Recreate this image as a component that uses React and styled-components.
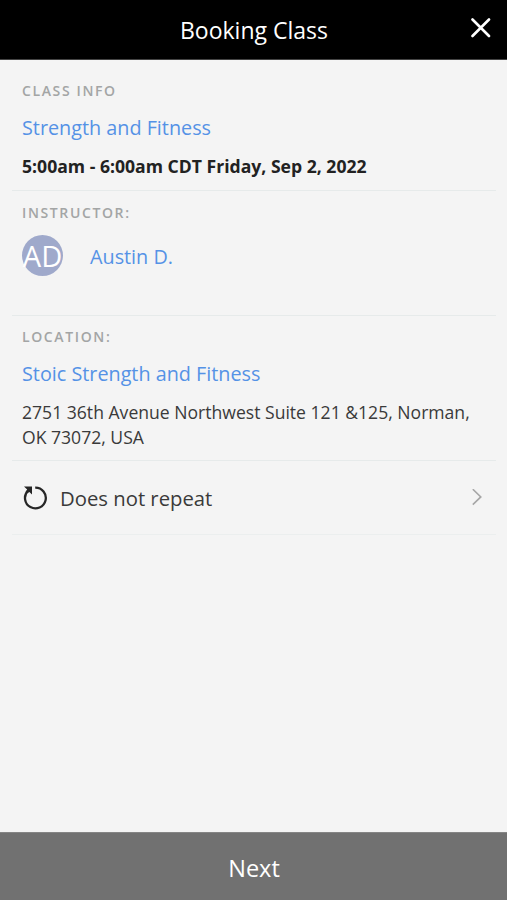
import React from "react";
import styled, { createGlobalStyle } from "styled-components";

export default function App() {
  return (
    <>
      <GlobalStyle />
      <Page>
        <Header>
          <Title>Booking Class</Title>
          <CloseButton aria-label="Close">
            <svg width="20" height="20" viewBox="0 0 20 20" fill="none" stroke="#fff" strokeWidth="2.6" strokeLinecap="round">
              <path d="M1.5 1.5L18 18M18 1.5L1.5 18" />
            </svg>
          </CloseButton>
        </Header>
        <Content>
          <Section $height={131}>
            <Label>CLASS INFO</Label>
            <LinkText href="#class">Strength and Fitness</LinkText>
            <Time>5:00am - 6:00am CDT Friday, Sep 2, 2022</Time>
          </Section>
          <Section $height={125}>
            <Label>INSTRUCTOR:</Label>
            <Instructor>
              <Avatar>AD</Avatar>
              <InstructorName href="#instructor">Austin D.</InstructorName>
            </Instructor>
          </Section>
          <Section $height={145} $top={11}>
            <Label>LOCATION:</Label>
            <LinkText href="#location">Stoic Strength and Fitness</LinkText>
            <Address>2751 36th Avenue Northwest Suite 121 &amp;125, Norman, OK 73072, USA</Address>
          </Section>
          <RepeatRow>
            <svg width="26" height="26" viewBox="0 0 26 26" fill="none">
              <path d="M13.2 2.6A10.4 10.4 0 1 1 5.9 5.8" stroke="#262626" strokeWidth="2.3" />
              <path d="M2 1.6H10V9.4L7.4 7L5 8.6L3.6 7L5.2 4.4Z" fill="#262626" />
            </svg>
            <RepeatText>Does not repeat</RepeatText>
            <svg width="10" height="18" viewBox="0 0 10 18" fill="none" stroke="#a6a6a6" strokeWidth="1.6">
              <path d="M0.8 0.2L8.8 7.9L0.8 15.6" />
            </svg>
          </RepeatRow>
        </Content>
        <NextButton>Next</NextButton>
      </Page>
    </>
  );
}

const GlobalStyle = createGlobalStyle`
  * {
    box-sizing: border-box;
  }
  body {
    margin: 0;
    font-family: "Open Sans", sans-serif;
    background: #f4f4f4;
  }
`;
const Page = styled.div`
  display: flex;
  flex-direction: column;
  height: 100vh;
  background: #f4f4f4;
`;
const Header = styled.header`
  display: grid;
  grid-template-columns: 1fr auto 1fr;
  align-items: center;
  height: 60px;
  flex-shrink: 0;
  padding: 0 16px 0 17px;
  background: #000;
  border-bottom: 1px solid #444;
`;
const Title = styled.h1`
  grid-column: 2;
  margin: 0;
  color: #fff;
  font-size: 23px;
  font-weight: 400;
  line-height: 32px;
`;
const CloseButton = styled.button`
  display: flex;
  justify-self: end;
  margin-bottom: 3px;
  padding: 0;
  border: 0;
  background: none;
`;
const Content = styled.main`
  flex: 1;
  padding: 0 11px 0 12px;
`;
const Section = styled.section`
  height: ${(props) => props.$height}px;
  padding: ${(props) => props.$top || 12}px 10px 0;
  border-bottom: 1px solid #e6eaea;
  &:first-child {
    padding-top: 21px;
  }
`;
const Label = styled.h2`
  margin: 0;
  color: #a3a5a5;
  font-size: 14px;
  font-weight: 600;
  line-height: 20px;
  letter-spacing: 1.62px;
`;
const LinkText = styled.a`
  display: block;
  margin-top: 13px;
  color: #5592e6;
  font-size: 19.8px;
  line-height: 28px;
  text-decoration: none;
`;
const Time = styled.p`
  margin: 12px 0 0;
  color: #222;
  font-size: 17.6px;
  font-weight: 700;
  line-height: 25px;
`;
const Instructor = styled.div`
  display: flex;
  align-items: center;
  margin-top: 12px;
`;
const Avatar = styled.div`
  display: flex;
  align-items: center;
  justify-content: center;
  width: 41px;
  height: 41px;
  border-radius: 50%;
  background: #9fa9cb;
  color: #fff;
  font-size: 29px;
  line-height: 41px;
`;
const InstructorName = styled(LinkText)`
  margin: 2px 0 0 27px;
`;
const Address = styled.p`
  margin: 12px 0 0;
  color: #3a3a3a;
  font-size: 17.58px;
  line-height: 24.5px;
`;
const RepeatRow = styled.div`
  display: flex;
  align-items: center;
  height: 74px;
  padding: 0 14px 0 10px;
  border-bottom: 1px solid #ebeeee;
`;
const RepeatText = styled.span`
  flex: 1;
  margin-left: 12px;
  color: #3a3a3a;
  font-size: 20.3px;
  line-height: 30px;
`;
const NextButton = styled.button`
  height: 68px;
  flex-shrink: 0;
  padding: 3px 0 0 1px;
  border: 0;
  border-top: 1px solid #858585;
  background: #717171;
  color: #fff;
  font-family: inherit;
  font-size: 23.5px;
`;
